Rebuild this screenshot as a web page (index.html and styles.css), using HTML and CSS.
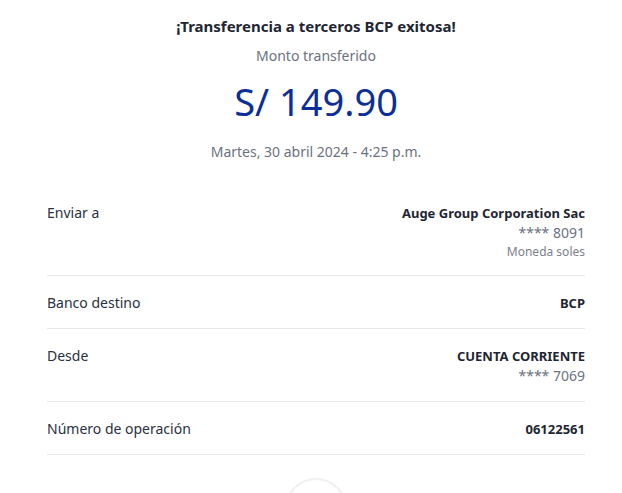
FILE: index.html
```html
<!DOCTYPE html>
<html lang="es">
<head>
<meta charset="utf-8">
<link rel="stylesheet" href="styles.css">
</head>
<body>
<main class="receipt">
  <header class="summary">
    <h1 class="title">¡Transferencia a terceros BCP exitosa!</h1>
    <p class="amount-label">Monto transferido</p>
    <p class="amount">S/ 149.90</p>
    <p class="date">Martes, 30 abril 2024 - 4:25 p.m.</p>
  </header>
  <section class="details">
    <div class="row">
      <span class="label">Enviar a</span>
      <div class="value">
        <strong>Auge Group Corporation Sac</strong>
        <span class="sub">**** 8091</span>
        <span class="note">Moneda soles</span>
      </div>
    </div>
    <div class="row">
      <span class="label">Banco destino</span>
      <div class="value"><strong>BCP</strong></div>
    </div>
    <div class="row">
      <span class="label">Desde</span>
      <div class="value">
        <strong>CUENTA CORRIENTE</strong>
        <span class="sub">**** 7069</span>
      </div>
    </div>
    <div class="row">
      <span class="label">Número de operación</span>
      <div class="value"><strong>06122561</strong></div>
    </div>
  </section>
  <div class="action"><span class="circle"></span></div>
</main>
</body>
</html>
```
FILE: styles.css
```css
html, body {
  margin: 0;
  padding: 0;
  background: #ffffff;
}
body {
  font-family: "Noto Sans", "Liberation Sans", sans-serif;
  color: #1f2633;
  overflow: hidden;
  height: 493px;
}
.receipt {
  width: 538px;
  margin-left: 47px;
}
.summary {
  display: flex;
  flex-direction: column;
  align-items: center;
  padding-top: 15px;
}
.summary p, .summary h1 { margin: 0; }
.title {
  font-size: 15px;
  font-weight: 700;
  line-height: 22px;
  color: #1f2633;
}
.amount-label {
  margin-top: 9px !important;
  font-size: 14px;
  line-height: 20px;
  color: #6b7280;
}
.amount {
  margin-top: 12px !important;
  font-size: 38px;
  line-height: 46px;
  color: #0c2f96;
}
.date {
  margin-top: 18px !important;
  font-size: 14px;
  line-height: 20px;
  color: #6b7280;
}
.details {
  margin-top: 24px;
}
.row {
  display: flex;
  justify-content: space-between;
  align-items: flex-start;
  padding: 17px 0 15px;
  border-bottom: 1px solid #e4e6ea;
  font-size: 14px;
  line-height: 20px;
}
.label { color: #2a3140; }
.value {
  display: flex;
  flex-direction: column;
  align-items: flex-end;
  text-align: right;
}
.value strong { font-weight: 700; font-size: 13px; color: #1f2633; }
.sub { color: #6b7280; }
.note { color: #7b818c; font-size: 12px; line-height: 17px; }
.action {
  display: flex;
  justify-content: center;
  padding-top: 23px;
}
.circle {
  width: 58px;
  height: 58px;
  border-radius: 50%;
  border: 2px solid #eef0f2;
}
```
